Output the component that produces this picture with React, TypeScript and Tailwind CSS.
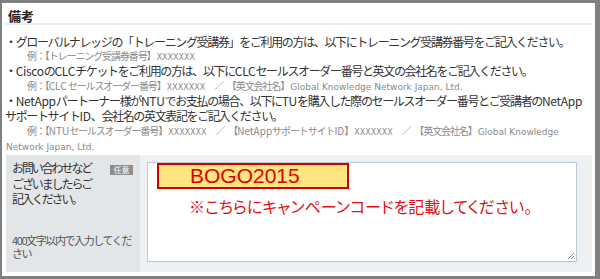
import React from "react";

const jp = "font-['Noto_Sans_CJK_JP','Noto_Sans',sans-serif]";
const latX = "font-['DejaVu_Sans','Noto_Sans_CJK_JP',sans-serif] text-[8px] tracking-[0px]";
const latG = "font-['DejaVu_Sans','Noto_Sans_CJK_JP',sans-serif] text-[9px] tracking-[0px]";

function L({ children }: { children: React.ReactNode }) {
  return <span className="tracking-[-0.3px]">{children}</span>;
}

function Main({ children }: { children: React.ReactNode }) {
  return (
    <div className="h-[14.875px] leading-[14.875px] text-[12px] tracking-[-1.35px] text-[#333] whitespace-nowrap">
      {children}
    </div>
  );
}

function Small({ children, indent = true }: { children: React.ReactNode; indent?: boolean }) {
  return (
    <div
      className={`h-[14.875px] leading-[14.875px] text-[10px] tracking-[-1.1px] text-[#8a8a8a] whitespace-nowrap ${
        indent ? "pl-[22px]" : "pl-[1px]"
      }`}
    >
      {children}
    </div>
  );
}

export default function App() {
  return (
    <div
      className={`w-[600px] h-[279px] bg-white border-solid border-[#7f7f7f] border-l-2 border-t-[3px] border-r-[5px] border-b-[3px] overflow-hidden flex flex-col ${jp}`}
    >
      <div className="mx-[3px] h-[22px] border-b-2 border-[#ececec] pl-[3px] pt-[4px] text-[13px] leading-[18px] font-bold text-[#222]">
        備考
      </div>
      <div className="pt-[9.5px] pl-[3px]">
        <Main>・グローバルナレッジの「トレーニング受講券」をご利用の方は、以下にトレーニング受講券番号をご記入ください。</Main>
        <Small>
          例：【トレーニング受講券番号】 <span className={latX}>XXXXXXX</span>
        </Small>
        <Main>
          ・<L>Cisco</L>の<L>CLC</L>チケットをご利用の方は、以下に<L>CLC</L>セールスオーダー番号と英文の会社名をご記入ください。
        </Main>
        <Small>
          例：【<span className="tracking-[0px]">CLC</span> セールスオーダー番号】 <span className={latX}>XXXXXXX</span>　／　【英文会社名】{" "}
          <span className={latG}>Global Knowledge Network Japan, Ltd.</span>
        </Small>
        <Main>
          ・<L>NetApp</L>パートーナー様が<L>NTU</L>でお支払の場合、以下に<L>TU</L>を購入した際のセールスオーダー番号とご受講者の<L>NetApp</L>
        </Main>
        <Main>
          サポートサイト<L>ID</L>、会社名の英文表記をご記入ください。
        </Main>
        <Small>
          例：【<span className="tracking-[0px]">NTU</span>セールスオーダー番号】 <span className={latX}>XXXXXXX</span>　／　【
          <span className="tracking-[0px]">NetApp</span>サポートサイト<span className="tracking-[0px]">ID</span>】{" "}
          <span className={latX}>XXXXXXX</span>　／　【英文会社名】 <span className={latG}>Global Knowledge</span>
        </Small>
        <Small indent={false}>
          <span className={latG}>Network Japan, Ltd.</span>
        </Small>
      </div>
      <div className="mt-[1.5px] ml-[4px] mr-[3px] h-[117px] flex">
        <div className="relative w-[134px] bg-[#e3e6e9] pl-[6px] pt-[5px] text-[#333] whitespace-nowrap">
          <div className="text-[12px] leading-[15.5px] tracking-[-2.1px]">
            <div>お問い合わせなど</div>
            <div>ございましたらご</div>
            <div>記入ください。</div>
          </div>
          <div className="absolute left-[104px] top-[10px] w-[23px] h-[10px] bg-[#8e8e8e] text-white text-[8px] leading-[10px] text-center">
            任意
          </div>
          <div className="mt-[27px] text-[11px] leading-[13px] tracking-[-1.4px] text-[#555]">
            <div>400文字以内で入力してくだ</div>
            <div>さい</div>
          </div>
        </div>
        <div className="flex-1 bg-[#eef1f3] pl-[7px] pt-[7px] pr-[15px] pb-[10px]">
          <div className="relative h-full bg-white border border-[#b9c9d8] pl-[9px]">
            <div className="w-[192px] h-[26px] border-2 border-[#d40000] bg-[#ffe680] pl-[31px] text-[21px] leading-[22px] text-[#e00000] font-['Liberation_Sans',Arial,sans-serif]">
              BOGO2015
            </div>
            <div className="mt-[7px] pl-[32px] text-[16px] leading-[20px] text-[#e01010] whitespace-nowrap [font-feature-settings:'palt']">
              ※こちらにキャンペーンコードを記載してください。
            </div>
            <svg className="absolute right-[1px] bottom-[1px]" width="8" height="8" viewBox="0 0 8 8">
              <path d="M7 1 L1 7 M7 4 L4 7" stroke="#888" strokeWidth="1" />
            </svg>
          </div>
        </div>
      </div>
    </div>
  );
}
